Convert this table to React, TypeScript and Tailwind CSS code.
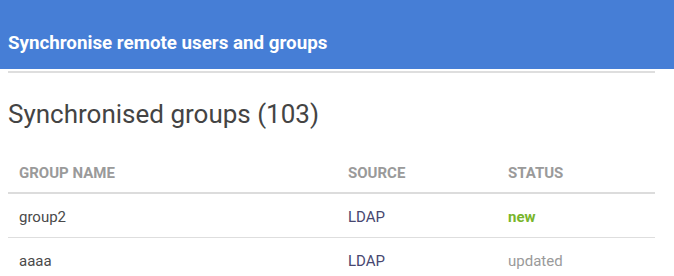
const rows = [
  { name: 'group2', source: 'LDAP', status: 'new' },
  { name: 'aaaa', source: 'LDAP', status: 'updated' },
];

export default function App() {
  return (
    <div className="w-[674px] h-[276px] overflow-hidden bg-white" style={{ fontFamily: 'Roboto, "Liberation Sans", sans-serif' }}>
      {/* Title bar */}
      <div className="h-[69px] bg-[#467ed6] flex items-end pb-[15px] px-2">
        <h1 className="text-white font-bold text-[18.75px] leading-[22px]">Synchronise remote users and groups</h1>
      </div>
      <div className="mx-2 mt-[2px] h-[2px] w-[647px] bg-[#dedede]" />

      <h2 className="mt-[26px] px-2 text-[26px] leading-[30px] text-[#444]">Synchronised groups (103)</h2>

      {/* Groups table */}
      <div className="mt-[22px] mx-2 w-[647px]">
        <div className="grid grid-cols-[329px_160px_158px] h-[43px] pt-[4px] items-center border-b-2 border-[#dcdcdc] text-[15px] font-bold uppercase text-[#9a9a9a]">
          <div className="pl-[11px]">Group name</div>
          <div className="pl-[11px]">Source</div>
          <div className="pl-[11px]">Status</div>
        </div>
        {rows.map((r) => (
          <div key={r.name} className="grid grid-cols-[329px_160px_158px] h-[44px] pt-[3px] items-center border-b border-[#dedede] text-[15px]">
            <div className="pl-[11px] text-[#4a4a4a]">{r.name}</div>
            <div className="pl-[11px] text-[#474770]">{r.source}</div>
            <div className={`pl-[11px] ${r.status === 'new' ? 'font-bold text-[#78b52b]' : 'text-[#9a9a9a]'}`}>{r.status}</div>
          </div>
        ))}
      </div>
    </div>
  );
}
